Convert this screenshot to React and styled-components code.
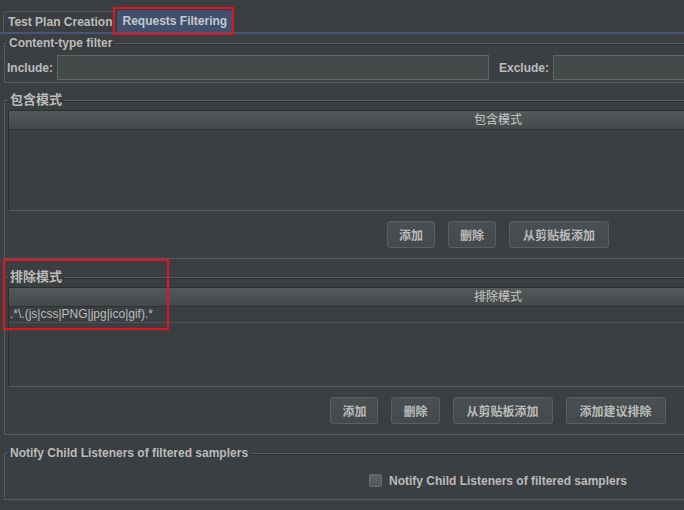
import React, { useState } from 'react';
import styled, { createGlobalStyle } from 'styled-components';

const GlobalStyle = createGlobalStyle`
  html, body {
    margin: 0;
    padding: 0;
    background: #3c3f41;
    overflow: hidden;
  }
  body {
    font-family: "Liberation Sans", "Noto Sans CJK SC", Arial, sans-serif;
    font-size: 12px;
    color: #bbbbbb;
  }
`;

const Window = styled.div`
  position: relative;
  width: 996px;
  height: 510px;
  background: #3c3f41;
`;

const TabBar = styled.div`
  display: flex;
  align-items: flex-end;
  height: 32px;
  padding-left: 3px;
  gap: 1px;
  border-bottom: 2px solid #46557a;
`;

const Tab = styled.div`
  display: flex;
  align-items: center;
  box-sizing: border-box;
  height: ${p => (p.$active ? '23px' : '21px')};
  padding: ${p => (p.$active ? '0 5px 0 5px' : '0 2px 0 4px')};
  font-weight: bold;
  color: ${p => (p.$active ? '#c4c8cf' : '#bbbbbb')};
  background: ${p => (p.$active ? '#41506d' : '#3c3f41')};
  border: 1px solid ${p => (p.$active ? '#2f3a50' : '#575a5c')};
  border-bottom: none;
  border-radius: 3px 3px 0 0;
  cursor: default;
  white-space: nowrap;
`;

const Panel = styled.div`
  display: flex;
  flex-direction: column;
  padding: 2px 4px 0 4px;
`;

const Group = styled.fieldset`
  margin: ${p => p.$gap || 0}px 0 0 0;
  padding: ${p => p.$pad || '0 3px'};
  border: 1px solid #5a5d5f;
  box-shadow: inset 0 1px 0 #2e3032;
  min-width: 0;
`;

const Title = styled.legend`
  margin-left: 0;
  padding: 0 2px;
  line-height: 14px;
  font-size: ${p => (p.$cjk ? '13px' : '12px')};
  font-weight: bold;
  color: #bbbbbb;
`;

const FilterRow = styled.div`
  display: flex;
  align-items: center;
  padding: 5px 0 2px 0;
`;

const FieldLabel = styled.label`
  font-weight: bold;
  width: ${p => p.$w}px;
  margin-left: ${p => p.$ml || 0}px;
  flex: none;
`;

const TextInput = styled.input`
  box-sizing: border-box;
  width: 432px;
  height: 25px;
  background: #45494a;
  border: 1px solid #646464;
  color: #bbbbbb;
  font: inherit;
  padding: 0 4px;
  outline: none;
`;

const TableBox = styled.div`
  display: flex;
  flex-direction: column;
  box-sizing: border-box;
  height: ${p => p.$h}px;
  margin-top: 3px;
  border: 1px solid #2b2d2f;
  border-bottom-color: #5a5d5f;
  background: #3c3f41;
`;

const HeaderCell = styled.div`
  height: 18px;
  line-height: 18px;
  text-align: center;
  color: #c8c8c8;
  background: linear-gradient(#56595b, #45484a);
  border-bottom: 1px solid #2f3133;
`;

const Row = styled.div`
  height: 15px;
  line-height: 15px;
  padding-left: 1px;
  color: #bbbbbb;
  border-bottom: 1px solid #505355;
  white-space: nowrap;
`;

const ButtonRow = styled.div`
  display: flex;
  justify-content: center;
  gap: 13px;
  padding: 10px 0 10px 0;
`;

const Button = styled.button`
  box-sizing: border-box;
  height: 27px;
  padding: ${p => (p.$narrow ? '0 11px' : '0 13px')};
  background: linear-gradient(#4b4f51, #45494b);
  border: 1px solid #5b5f61;
  border-radius: 3px;
  color: #bbbbbb;
  font-family: "Liberation Sans", "Noto Sans CJK SC", sans-serif;
  font-size: 12px;
  font-weight: bold;
  cursor: default;
`;

const CheckRow = styled.div`
  display: flex;
  align-items: center;
  justify-content: center;
  gap: 7px;
  height: 39px;
  padding-top: 2px;
  box-sizing: border-box;
  font-weight: bold;
`;

const Box = styled.span`
  box-sizing: border-box;
  width: 13px;
  height: 13px;
  background: linear-gradient(#5e6164, #55585a);
  border: 1px solid #6b6e70;
  border-radius: 2px;
  flex: none;
`;

const Marker = styled.div`
  position: absolute;
  box-sizing: border-box;
  border: 2px solid #e3141f;
  pointer-events: none;
`;

const PatternTable = ({ title, rows, height, buttons }) => (
  <>
    <TableBox $h={height}>
      <HeaderCell>{title}</HeaderCell>
      {rows.map(r => (
        <Row key={r}>{r}</Row>
      ))}
    </TableBox>
    <ButtonRow>
      {buttons.map(b => (
        <Button key={b} $narrow={b.length <= 2}>{b}</Button>
      ))}
    </ButtonRow>
  </>
);

export default function App() {
  const [notify, setNotify] = useState(false);

  return (
    <Window>
      <GlobalStyle />
      <TabBar>
        <Tab>Test Plan Creation</Tab>
        <Tab $active>Requests Filtering</Tab>
      </TabBar>

      <Panel>
        <Group $pad="0 3px 0 2px">
          <Title>Content-type filter</Title>
          <FilterRow>
            <FieldLabel $w={50}>Include:</FieldLabel>
            <TextInput />
            <FieldLabel $w={54} $ml={10}>Exclude:</FieldLabel>
            <TextInput />
          </FilterRow>
        </Group>

        <Group $gap={10}>
          <Title $cjk>包含模式</Title>
          <PatternTable
            title="包含模式"
            rows={[]}
            height={101}
            buttons={['添加', '删除', '从剪贴板添加']}
          />
        </Group>

        <Group $gap={11}>
          <Title $cjk>排除模式</Title>
          <PatternTable
            title="排除模式"
            rows={['.*\\.(js|css|PNG|jpg|ico|gif).*']}
            height={100}
            buttons={['添加', '删除', '从剪贴板添加', '添加建议排除']}
          />
        </Group>

        <Group $gap={11}>
          <Title>Notify Child Listeners of filtered samplers</Title>
          <CheckRow onClick={() => setNotify(!notify)}>
            <Box />
            <span>Notify Child Listeners of filtered samplers</span>
          </CheckRow>
        </Group>
      </Panel>

      <Marker style={{ left: 113, top: 7, width: 121, height: 28 }} />
      <Marker style={{ left: 3, top: 259, width: 166, height: 71 }} />
    </Window>
  );
}
